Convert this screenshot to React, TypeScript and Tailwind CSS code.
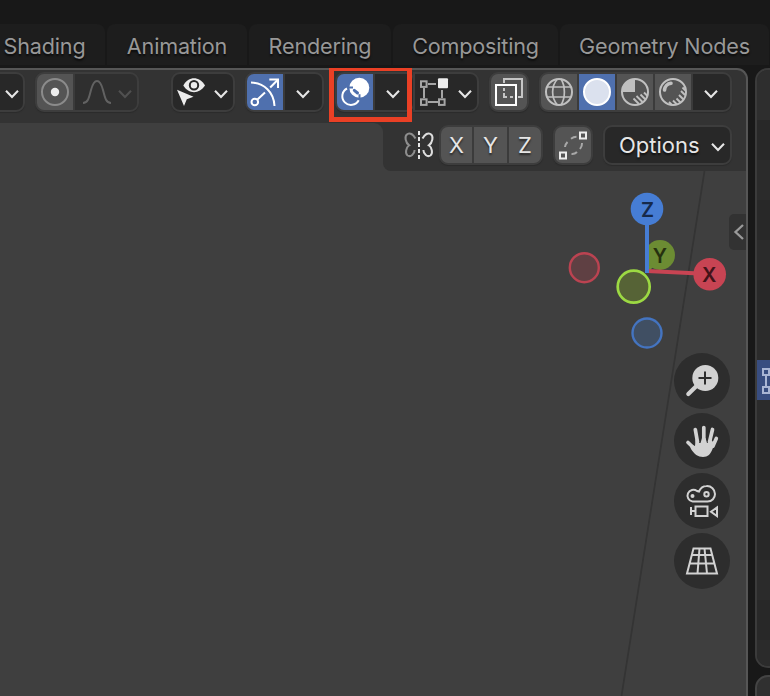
import React from "react";

function Chevron({ className = "" }: { className?: string }) {
  return (
    <svg viewBox="0 0 16 10" className={"h-[10px] w-4 shrink-0 " + className} fill="none" stroke="currentColor" strokeWidth="2.1">
      <path d="M2 1.800 8 8l6-6.200" />
    </svg>
  );
}

function Icon({ children, className = "" }: { children: React.ReactNode; className?: string }) {
  return (
    <svg viewBox="0 0 36 36" className={"size-9 shrink-0 " + className} fill="none">
      {children}
    </svg>
  );
}

function Group({ children, className = "" }: { children: React.ReactNode; className?: string }) {
  return (
    <div className={"flex h-10 shrink-0 gap-0.5 overflow-hidden rounded-[9px] border-2 border-[#3d3d3d] bg-[#3b3b3b] shadow-[0_1px_1px_#2b2b2b] " + className}>
      {children}
    </div>
  );
}

function Drop({ className = "pr-px" }: { className?: string }) {
  return (
    <div className={"flex flex-1 items-center justify-center bg-[#282828] pt-[3px] text-[#e6e6e6] " + className}>
      <Chevron />
    </div>
  );
}

function Tab({ label, className }: { label: string; className: string }) {
  return (
    <div className={"flex h-[41px] shrink-0 items-center justify-center rounded-t-[8px] bg-[#1d1d1d] pt-[3px] text-[21.6px] tracking-[-0.18px] whitespace-nowrap text-[#989898] [text-shadow:0_2px_2px_#000a] " + className}>
      {label}
    </div>
  );
}

function Tabs() {
  return (
    <nav className="flex h-[68px] items-start gap-0.5 pt-6">
      <Tab label="Shading" className="-ml-4 w-[121px]" />
      <Tab label="Animation" className="w-[140px]" />
      <Tab label="Rendering" className="w-[142px]" />
      <Tab label="Compositing" className="w-[165px]" />
      <Tab label="Geometry Nodes" className="w-[209px]" />
    </nav>
  );
}

function HeaderRow() {
  return (
    <div className="relative flex h-[53px] items-start pt-0.5">
      <Group className="-ml-4 w-[41px]">
        <Drop className="pl-[14px]" />
      </Group>

      <Group className="ml-2.5 w-[104px]">
        <Icon className="bg-[#545454]">
          <circle cx="18" cy="18" r="13" stroke="#8b8b8b" strokeWidth="2" />
          <circle cx="18" cy="18" r="4.200" fill="#ececec" />
        </Icon>
        <div className="flex flex-1 items-center bg-[#2f2f2f] text-[#505050]">
          <svg viewBox="0 0 36 36" className="ml-1 size-9" fill="none" stroke="#626262" strokeWidth="2">
            <path d="M4 29c5 0 6-5 8-13 1.600-6 3-9 6-9s4.400 3 6 9c2 8 3 13 8 13" />
          </svg>
          <Chevron className="mt-[3px] ml-0.5" />
        </div>
      </Group>

      <Group className="ml-8 w-16">
        <div className="flex flex-1 items-center bg-[#282828] text-[#e6e6e6]">
          <Icon>
            <path d="M10.300 11.500C13 6.500 17 4.300 21 4.300s8.200 2.200 11 7.200c-3 4.500-7 6.700-11 6.700s-8-2.200-10.700-6.700Z" fill="#ececec" />
            <circle cx="21" cy="11.200" r="4.200" stroke="#282828" strokeWidth="2" />
            <path d="M4 15.700 20.500 22.700 13.800 25.300 11 32Z" fill="#ececec" />
          </Icon>
          <Chevron className="mt-[3px] ml-1" />
        </div>
      </Group>

      <Group className="ml-2.5 w-[79px]">
        <Icon className="bg-[#4f70ae]">
          <g stroke="#fff" strokeWidth="2">
            <path d="M4 8.500C17 9 27 18 27.500 32" />
            <path d="M22.300 5.500H31V14" />
            <path d="m30.800 5.700-7.600 7.800M18 18.500l-7.800 7.300" />
            <circle cx="7.800" cy="28" r="3.300" />
          </g>
        </Icon>
        <Drop />
      </Group>

      <Group className="ml-[11px] w-20">
        <Icon className="bg-[#4f70ae]">
          <circle cx="22.300" cy="13.700" r="10" fill="#fff" />
          <path d="M11.500 13.500h4.500M22.500 20.300v4.500" stroke="#4f70ae" strokeWidth="2" />
          <path d="m17.300 16.300 3.200 2.700" stroke="#4f70ae" strokeWidth="3" strokeLinecap="round" />
          <path d="M10 14.500a8.700 8.700 0 1 0 11.700 11.800" stroke="#fff" strokeWidth="2" />
        </Icon>
        <Drop className="pr-0.5" />
      </Group>

      <Group className="-ml-0.5 w-[66px] rounded-l-none">
        <div className="flex flex-1 items-center bg-[#282828] text-[#e6e6e6]">
          <Icon>
            <g stroke="#a5a5a5" strokeWidth="2">
              <rect x="6" y="7.300" width="5.600" height="5.600" />
              <rect x="6" y="25.300" width="5.600" height="5.600" />
              <rect x="24" y="25.300" width="5.600" height="5.600" />
              <path d="M13 10h8M9 14v10M13 28h10M27 16v8" />
            </g>
            <rect x="23" y="4.300" width="10" height="10" rx="1" fill="#ececec" />
          </Icon>
          <Chevron className="mt-[3px] ml-1.5" />
        </div>
      </Group>

      <Group className="ml-2.5 w-10">
        <Icon className="bg-[#545454]">
          <path d="M13 9V5h18v18h-4" stroke="#c5c5c5" strokeWidth="2" />
          <rect x="5" y="11" width="20" height="20" stroke="#fff" strokeWidth="2" />
          <path d="M13 14v3M13 19v4h3M19 23h3" stroke="#c5c5c5" strokeWidth="2" />
        </Icon>
      </Group>

      <Group className="ml-2.5 w-[193px]">
        <Icon className="bg-[#545454]">
          <g stroke="#c0c0c0" strokeWidth="2">
            <circle cx="18" cy="18" r="13" />
            <path d="M16.500 5c-6.500 7-6.500 19 0 26M20 5c4.500 7 4.500 19 0 26" strokeWidth="1.700" />
            <path d="M6 13h24M5.500 23h25" strokeWidth="1.700" />
          </g>
        </Icon>
        <Icon className="bg-[#4f70ae]">
          <circle cx="18" cy="18" r="13" fill="#dbe1ee" stroke="#fff" strokeWidth="2" />
        </Icon>
        <Icon className="bg-[#545454]">
          <circle cx="18" cy="18" r="13" stroke="#c0c0c0" strokeWidth="2" />
          <path d="M18 18V5A13 13 0 0 0 5 18Z" fill="#c0c0c0" />
          <path d="m16.500 24.500 5.500 5.500M19.500 22l6 6M23.500 20.500l5 5M27 18.500l3.500 3.500" stroke="#c0c0c0" strokeWidth="1.900" />
        </Icon>
        <Icon className="bg-[#545454]">
          <circle cx="18" cy="18" r="13" stroke="#c0c0c0" strokeWidth="2" />
          <path d="M9.500 16c.3-3.600 3-6.300 6.500-6.700" stroke="#c0c0c0" strokeWidth="3.600" strokeLinecap="round" />
          <path d="m14 28 3 3M18 26.500l4 4M21.500 24.500l4 4M24 21l4.500 4.500M26 17l4 4M27.500 13.500l3 3" stroke="#c0c0c0" strokeWidth="1.900" />
        </Icon>
        <Drop />
      </Group>

      <div className="absolute top-[-4px] left-[329px] h-14 w-[83px] border-[5px] border-[#ea4025]" />
    </div>
  );
}

function Axis({ label, className }: { label: string; className: string }) {
  return (
    <div className={"flex items-center justify-center bg-[#545454] text-[22px] text-[#e6e6e6] [text-shadow:0_2px_2px_#0008] " + className}>
      {label}
    </div>
  );
}

function ToolRow() {
  return (
    <div className="flex h-12">
      <div className="w-[383px] rounded-tr-[9px] bg-[#3f3f3f]" />
      <div className="flex flex-1 bg-[#3f3f3f]">
        <div className="-mt-px flex flex-1 items-start rounded-bl-[8px] border-t border-[#333333] bg-[#333333] pt-0.5 pl-5">
          <svg viewBox="0 0 32 40" className="h-10 w-8" fill="none" strokeWidth="2">
            <path d="M16 6v28" stroke="#e6e6e6" strokeDasharray="4 2" />
            <path d="M12.500 13.500C10 9 7 7.500 4.500 9 1 11 2.500 18 6.200 20.300 3 22.500 1.800 28.500 4.600 30.500c3 2 7-1.500 7-5.500" stroke="#8e8e8e" />
            <path d="M19.500 13.500C22 9 25 7.500 27.500 9c3.500 2 2 9-1.700 11.300 3.200 2.200 4.400 8.200 1.600 10.200-3 2-7-1.500-7-5.500" stroke="#dedede" />
          </svg>
          <Group className="ml-1 w-[104px]">
            <Axis label="X" className="w-[31px]" />
            <Axis label="Y" className="w-[33px]" />
            <Axis label="Z" className="w-8" />
          </Group>
          <Group className="ml-2.5 w-10">
            <Icon className="bg-[#545454]">
              <rect x="25" y="5.500" width="6" height="6" stroke="#ececec" strokeWidth="2" />
              <rect x="5" y="25.500" width="6" height="6" stroke="#ececec" strokeWidth="2" />
              <path d="M21.500 9.800c-2 0-4 .8-5.500 2M12.500 15c-1.500 1.500-2.300 3-2.500 5M27 16c.2 2-.5 4-2 6M22 25c-1.500 1.500-3 2.200-5.500 2" stroke="#a8a8a8" strokeWidth="2" />
            </Icon>
          </Group>
          <Group className="ml-2.5 w-[129px]">
            <div className="flex flex-1 items-center bg-[#282828] pl-3.5 text-[22px] text-[#e6e6e6] [text-shadow:0_2px_2px_#000a]">
              Options
              <Chevron className="mt-[3px] mr-1 ml-auto" />
            </div>
          </Group>
        </div>
      </div>
    </div>
  );
}

function NavButton({ children }: { children: React.ReactNode }) {
  return (
    <div className="flex size-14 items-center justify-center rounded-full bg-[#2d2d2d]">
      <svg viewBox="0 0 36 36" className="size-9" fill="none" stroke="#d2d2d2" strokeWidth="2">
        {children}
      </svg>
    </div>
  );
}

function AxisGizmo() {
  return (
    <svg viewBox="564 189 164 164" className="absolute top-[18px] left-[564px] size-[164px] font-semibold" fontSize="20" textAnchor="middle">
      <circle cx="584.300" cy="267.700" r="14.500" fill="#5f4043" stroke="#bb4351" strokeWidth="2.400" />
      <circle cx="647" cy="333" r="14.500" fill="#404f63" stroke="#4474c0" strokeWidth="2.400" />
      <path d="m647 271 13-16" stroke="#6e8f35" strokeWidth="4" />
      <circle cx="660" cy="255" r="15" fill="#6c8c33" />
      <text x="660" y="262.500" fill="#26310f">Y</text>
      <path d="m647 271 63 3" stroke="#c84453" strokeWidth="4" />
      <circle cx="709.700" cy="274.300" r="16.300" fill="#c84453" />
      <text x="709.300" y="281.800" fill="#431319">X</text>
      <path d="M647 273v-64" stroke="#467dd4" strokeWidth="4" />
      <circle cx="647" cy="209" r="16.300" fill="#467dd4" />
      <text x="647.500" y="216.500" fill="#162a4a">Z</text>
      <circle cx="633.700" cy="286.700" r="16" fill="#566336" stroke="#9cd943" strokeWidth="2.700" />
    </svg>
  );
}

function Viewport() {
  return (
    <div className="relative flex-1 bg-[#3f3f3f]">
      <svg viewBox="0 0 746 525" className="absolute top-0 left-0 h-[525px] w-[746px]" fill="none">
        <path d="M704.500 0 621.500 525" stroke="#343434" strokeWidth="1.700" />
      </svg>
      <AxisGizmo />
      <div className="absolute top-[43px] right-0 flex h-9 w-[17px] items-center justify-center rounded-l-[5px] bg-[#323232]">
        <svg viewBox="0 0 12 18" className="ml-0.5 h-[18px] w-3" fill="none" stroke="#9a9a9a" strokeWidth="2.300">
          <path d="m10 2-7.500 7 7.500 7" />
        </svg>
      </div>
      <div className="absolute top-[182px] left-[674px] flex flex-col gap-1">
        <NavButton>
          <circle cx="21.300" cy="15" r="13" fill="#d2d2d2" stroke="none" />
          <path d="M13 22.500 4.300 31" strokeWidth="4.200" strokeLinecap="round" />
          <path d="M21 8.500v13M14.500 15h13" stroke="#2d2d2d" />
        </NavButton>
        <NavButton>
          <path d="M13.500 19 11.300 6.500M19.800 17V4.500M25.500 19l3-12.500M29 23l3.300-7.500M12 27 4 19.500" strokeWidth="3.700" strokeLinecap="round" />
          <path d="m11.600 16 1.400 4h3.500l1.500-5h3.500l1.500 5h1.500l2-4 4.300 5-2.300 5c-1.800 5-4.500 8-9.500 8s-9-3-12-8l-2-5 6 2Z" fill="#d2d2d2" stroke="none" />
        </NavButton>
        <NavButton>
          <path d="M8.500 18.500A5.900 5.900 0 1 1 13 8l2 .5c1.500-3.500 4-5.500 7.500-5.500a8 8 0 0 1 8.500 8c0 4-3 7.500-7.500 7.500H8.500" />
          <circle cx="22.500" cy="11.200" r="2.200" />
          <circle cx="8.500" cy="13" r="2" fill="#d2d2d2" stroke="none" />
          <path d="M11.500 23.500h12v9.500h-12ZM7 24v8M7 28h4M33 24.500v8.500l-6-4.200Z" />
        </NavButton>
        <NavButton>
          <path d="M9.500 5.500h17l6.500 25H3ZM8 12h20M5.500 20.500h25M15.500 5.500l-2 25M20.500 5.500l2.500 25" />
        </NavButton>
      </div>
    </div>
  );
}

const rowShades = ["bg-[#282828]", "bg-[#2b2b2b]"];

function Rows({ count, first }: { count: number; first: number }) {
  return (
    <>
      {Array.from({ length: count }, (_, i) => (
        <div key={i} className={"h-10 shrink-0 " + rowShades[(first + i) % 2]} />
      ))}
    </>
  );
}

function SideEditor() {
  return (
    <div className="ml-[7px] flex h-full flex-1 flex-col gap-[7px]">
      <div className="flex h-[600px] w-10 shrink-0 flex-col overflow-hidden rounded-[13px] border-2 border-[#3b3b3b] bg-[#2b2b2b]">
        <div className="h-[50px] shrink-0 bg-[#2e2e2e]" />
        <Rows count={6} first={0} />
        <div className="-ml-0.5 h-10 shrink-0 bg-[#384d80]">
          <svg viewBox="0 0 16 40" className="h-10 w-4" fill="none" stroke="#a9b5d4" strokeWidth="2">
            <path d="M8 9h6v6H8ZM8 27h6v6H8ZM11 16v10" />
          </svg>
        </div>
        <Rows count={7} first={1} />
      </div>
      <div className="h-20 w-10 shrink-0 rounded-[13px] border-2 border-[#444444] bg-[#303030]" />
    </div>
  );
}

export default function App() {
  return (
    <div className="flex h-[696px] w-[770px] flex-col overflow-hidden bg-[#181818] font-['Inter','Liberation_Sans',sans-serif]">
      <Tabs />
      <main className="flex min-h-0 flex-1 overflow-hidden">
        <section className="flex w-[748px] shrink-0 flex-col rounded-tr-[11px] border-t-2 border-r-2 border-[#565656] bg-[#333333]">
          <HeaderRow />
          <ToolRow />
          <Viewport />
        </section>
        <SideEditor />
      </main>
    </div>
  );
}
